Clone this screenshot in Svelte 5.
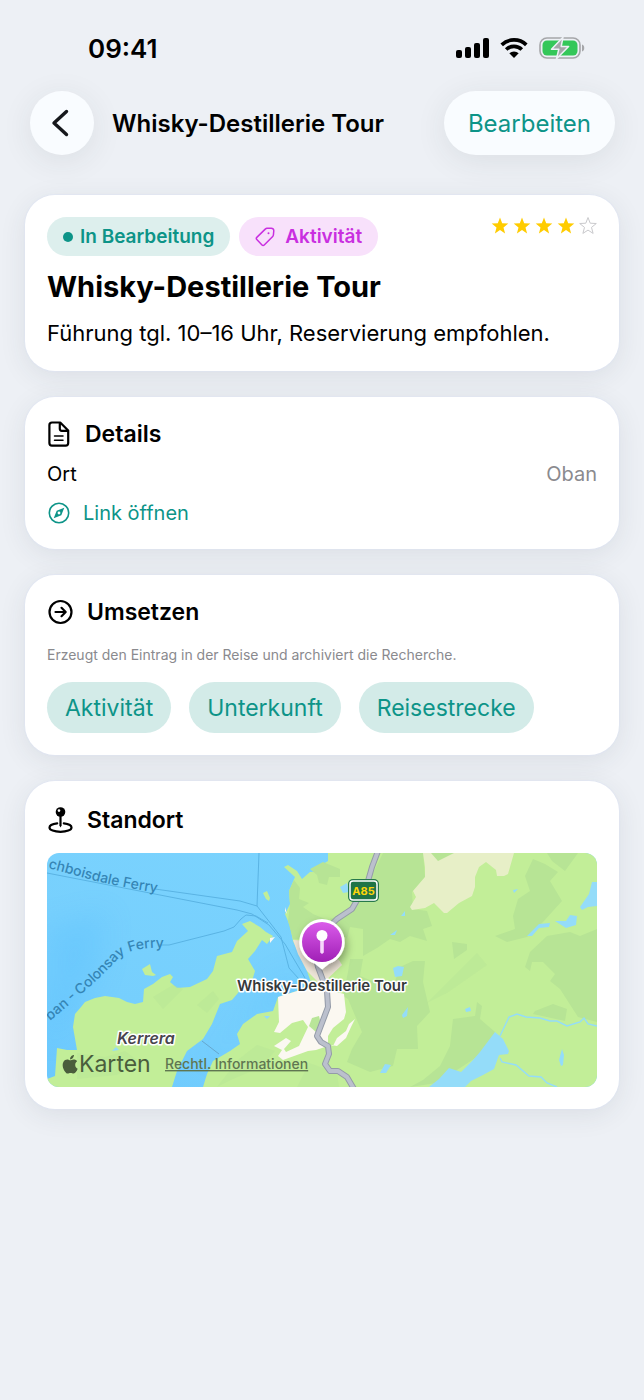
<script lang="ts">
	const title = 'Whisky-Destillerie Tour';
	const rating = 4;
	const targets = ['Aktivität', 'Unterkunft', 'Reisestrecke'];
	const starPath = 'M9 .5l2.200 5.700 6.100.3-4.800 3.900 1.600 6L9 13.100l-5.100 3.300 1.600-6L.7 6.500l6.100-.3z';
	const roadPath =
		'M331-2L325 14 321 28 305 56 290 66 274 82 268 100 271 114 280 138 281 154 270 183 274 189 281 193 282 201 278 211 283 218 291 218 300 224 307 236';
</script>

<div class="screen">
	<div class="status">
		<span class="time">09:41</span>
		<div class="indicators">
			<svg width="33" height="20" viewBox="0 0 33 20" aria-hidden="true">
				<rect x="0" y="12" width="6" height="8" rx="2" />
				<rect x="9" y="9" width="6" height="11" rx="2" />
				<rect x="18" y="5" width="6" height="15" rx="2" />
				<rect x="27" y="0" width="6" height="20" rx="2" />
			</svg>
			<svg width="28" height="20" viewBox="0 0 28 20" aria-hidden="true">
				<path d="M1.700 6.800a17.800 17.800 0 0 1 24.600 0M6.200 11.500a11.300 11.300 0 0 1 15.600 0" fill="none" stroke="#000" stroke-width="3.700" />
				<path d="M9.300 15.300a7 7 0 0 1 9.400 0L14 20z" />
			</svg>
			<svg width="46" height="22" viewBox="0 0 46 22" aria-hidden="true">
				<rect x="1" y="1" width="40" height="20" rx="7" fill="none" stroke="#a5a6a9" stroke-width="1.600" />
				<path d="M43 7.500c3 .8 3 6.200 0 7z" fill="#a5a6a9" />
				<rect x="3.500" y="3.500" width="35" height="15" rx="4.500" fill="#34c759" />
				<path d="M24 .2L12.500 12.300h7.300L17.500 21.800l12.100-12.300h-7.400z" fill="#a5a6a9" stroke="#edf0f5" stroke-width="1.500" stroke-linejoin="round" />
			</svg>
		</div>
	</div>

	<header>
		<button class="back" aria-label="Zurück">
			<svg width="18" height="28" viewBox="0 0 18 28" aria-hidden="true">
				<path d="M15.500 2.500L3 14l12.500 11.500" fill="none" stroke="#16181c" stroke-width="3.400" stroke-linecap="round" stroke-linejoin="round" />
			</svg>
		</button>
		<h1>{title}</h1>
		<button class="edit">Bearbeiten</button>
	</header>

	<main>
		<section class="card summary">
			<div class="top">
				<span class="chip status-chip"><i></i>In Bearbeitung</span>
				<span class="chip type-chip">
					<svg width="20" height="20" viewBox="0 0 20 20" fill="none" stroke="currentColor" stroke-width="1.500" stroke-linejoin="round" aria-hidden="true">
						<path d="M10.500 1.900L1.800 10.400a1.500 1.500 0 0 0 0 2.100l5.200 5.500a1.500 1.500 0 0 0 2.200 0L17.700 9.500q.6-.6.7-1.500l.4-4.200a2.500 2.500 0 0 0-2.700-2.600l-4.100.1q-.9.1-1.500.6z" />
						<circle cx="13.500" cy="6.300" r="1" fill="currentColor" stroke="none" />
					</svg>
					Aktivität
				</span>
				<div class="stars" role="img" aria-label="{rating} von 5">
					{#each [1, 2, 3, 4, 5] as n}
						<svg class:empty={n > rating} width="18" height="18" viewBox="0 0 18 18" aria-hidden="true"><path d={starPath} /></svg>
					{/each}
				</div>
			</div>
			<h2>{title}</h2>
			<p>Führung tgl. 10–16 Uhr, Reservierung empfohlen.</p>
		</section>

		<section class="card details">
			<h3>
				<svg width="24" height="28" viewBox="0 0 24 28" fill="none" stroke="#000" stroke-width="2.200" stroke-linecap="round" stroke-linejoin="round" aria-hidden="true">
					<path d="M5 2.500h8.200l8 8V23a2.600 2.600 0 0 1-2.600 2.600H5A2.600 2.600 0 0 1 2.400 23V5.100A2.600 2.600 0 0 1 5 2.500zM12.800 2.800v6a2 2 0 0 0 2 2h6" />
					<path d="M7.500 16h8.500M7.500 20.200h8.500" stroke-width="1.500" />
				</svg>
				Details
			</h3>
			<dl>
				<dt>Ort</dt>
				<dd>Oban</dd>
			</dl>
			<a class="link" href="#link">
				<svg width="24" height="24" viewBox="0 0 24 24" aria-hidden="true">
					<circle cx="12" cy="12" r="9.700" fill="none" stroke="currentColor" stroke-width="1.600" />
					<path d="M17.300 6.700l-3 7.600-7.600 3 3-7.600z" fill="currentColor" />
					<circle cx="12" cy="12" r="1.400" fill="#fff" />
				</svg>
				Link öffnen
			</a>
		</section>

		<section class="card convert">
			<h3>
				<svg width="26" height="26" viewBox="0 0 26 26" fill="none" stroke="#000" stroke-width="2.200" stroke-linecap="round" stroke-linejoin="round" aria-hidden="true">
					<circle cx="13.500" cy="13" r="11" />
					<path d="M8.500 13h10M14.500 8.800l4.200 4.200-4.200 4.200" />
				</svg>
				Umsetzen
			</h3>
			<p>Erzeugt den Eintrag in der Reise und archiviert die Recherche.</p>
			<div class="targets">
				{#each targets as target}
					<button>{target}</button>
				{/each}
			</div>
		</section>

		<section class="card place">
			<h3>
				<svg width="26" height="28" viewBox="0 0 26 28" aria-hidden="true">
					<path d="M10.200 17.300C5 17.900 2.500 19.500 2.500 21.400c0 2.600 4.800 4.400 11 4.400s11-1.800 11-4.400c0-1.900-2.500-3.500-7.700-4.100" fill="none" stroke="#000" stroke-width="2.200" stroke-linecap="round" />
					<path d="M12.400 9h2.200v10.500l-1.100 2-1.100-2z" />
					<circle cx="13.500" cy="6" r="4.800" />
					<circle cx="12" cy="4.600" r="1.300" fill="#fff" />
				</svg>
				Standort
			</h3>
			<svg class="map" viewBox="0 0 550 234">
				<defs>
					<linearGradient id="sea" x1="0" y1="1" x2="1" y2="0">
						<stop offset="0" stop-color="#6ac8fe" />
						<stop offset="0.250" stop-color="#76cffd" />
						<stop offset="1" stop-color="#7dd5fe" />
					</linearGradient>
					<linearGradient id="pin" x1="0" y1="0" x2="0" y2="1">
						<stop offset="0" stop-color="#da5bea" />
						<stop offset="1" stop-color="#a01fb6" />
					</linearGradient>
					<filter id="soft" x="-50%" y="-50%" width="200%" height="200%">
						<feGaussianBlur stdDeviation="14" />
					</filter>
					<filter id="drop" x="-50%" y="-50%" width="200%" height="200%">
						<feDropShadow dx="2" dy="4" stdDeviation="4" flood-opacity="0.350" />
					</filter>
					<path id="north-ferry" d="M1 15L34 24Q70 34 120 41" />
					<path id="south-ferry" d="M3 168C34 142 52 126 66 111C76 99 88 93 130 95" />
				</defs>

				<rect width="550" height="234" fill="url(#sea)" />
				<path d="M0 75L60 60 50 120 20 170 0 190zM160 205l45-50 30-30 18-8-6 30-50 25-40 40z" fill="#55bcff" opacity="0.300" filter="url(#soft)" />

				<!-- land -->
				<g fill="#c2ee98">
					<path d="M0 226L8 223 10 195 20 197 30 197 26 174 28 161 34 154 38 149 48 145 58 143 72 145 80 149 88 151 96 149 97 136 106 131 115 124 123 121 126 124 123 129 130 135 143 134 160 126 166 118 170 103 185 99 190 88 201 78 195 71 203 68 213 74 219 79 226 83 220 91 215 87 208 98 201 106 208 118 205 128 196 134 185 147 173 151 165 171 156 186 140 198 130 218 125 234H0z" />
					<path d="M156 234L160 221 166 208 183 198 193 191 190 181 196 171 210 161 226 158 231 144 250 138 267 138 260 118 252 101 246 88 243 73 238 61 243 51 242 38 248 24 237 14 241 12 250 18 255 26 263 19 273 18 276 11 281 8V0H550V234z" />
					<path d="M95 116l8-5 2 8 4 3-3 1-8-1zM216 40l4-2 3 7-1 3-3-2z" />
				</g>

				<!-- forest -->
				<g fill="#b7e495">
					<path d="M336 0L376 0 378 24 365 39 366 56 380 58 385 73 376 76 380 88 363 83 353 89 343 86 330 95 316 103 316 76 303 74 300 86 283 66 301 58 312 44 323 26z" />
					<path d="M243 51L242 38 247 27 253 35 252 46 262 50 256 54 266 61 283 68 272 88 253 86 246 86 241 68zM263 16L276 9 293 16 293 24 282 24 280 32 272 30 270 22z" />
					<path d="M303 106L316 106 313 123 330 130 348 128 353 114 366 108 378 108 376 129 383 159 370 173 371 196 350 196 346 213 323 219 300 209 305 196 315 179 301 146 296 143 301 119z" />
					<path d="M478 23L486 6 498 11 511 19 503 28 515 48 496 69 480 84 460 89 448 83 468 76 466 63 471 46 483 38z" />
					<path d="M478 114L483 99 500 83 523 79 533 83 550 76 550 169 531 164 513 136 503 128 508 121 496 109 485 109 483 118z" />
					<path d="M500 0L531 0 518 18 505 8zM488 158L506 151 520 156 518 168 486 161zM405 89L420 91 420 97 407 106z" />
					<path d="M363 234L376 227 393 213 403 193 406 166 428 163 430 149 435 153 433 166 448 179 436 200 390 230z" />
				</g>
				<g fill="#b7e495" opacity="0.400">
					<path d="M170 234L192 206 210 192 228 198 214 214 186 226zM30 200L58 204 78 198 94 210 70 222 30 226zM106 144L126 132 136 136 116 156zM150 152L166 138 172 146 160 160zM380 150L410 120 430 100 440 112 400 140zM262 210L290 220 292 234 250 234z" />
				</g>

				<!-- moor and town -->
				<path d="M376 0H467L461 21 457 23 450 23 449 17 439 9 432 14 428 24 428 34 425 43 412 50 400 60 397 60 387 50 378 55 365 57 363 54 369 44 366 38 378 24 378 14z" fill="#e7efc7" />
				<path d="M384 0h23l-8 4-8 4z" fill="#b7e495" />
				<path d="M246 87l20 1 26 19 3 5-21 20-14-14-9-17z" fill="#eee5d8" />
				<path d="M231 144l35-11 31 8 2 18-2 7-11 9-5 8 0 10-12 4-8 1-25 9-5-4 4-6-8-4 12-8 5 3-7 8 2 3 13-6 9-19-5-7-11 3-12 10-6-1 5-10zM286 193l4-8 9-7 3-7 6-5-4 8-5 11-9 8-6-1zM223 85l5-1-5 6zM238 54l2 7-2-3z" fill="#fbf8f1" />
				<path d="M265 165l7-2 2 8-5 8-7-6z" fill="#b9e699" />

				<!-- lakes and streams -->
				<g fill="#94dcf9">
					<path d="M382 234L392 226 402 215 414 219 426 207 433 199 448 179 456 186 462 198 461 201 452 202 447 216 436 222 424 228 418 234zM480 83l12-12 11-1-1 4-10 1-7 8zM508 68l11 0 4-6 7 1-1 9-10 3zM533 54l9-13 3-12h5v24l-9 1-6 3zM512 207l3-11 2 6-1 10-2 1zM346 115l5-2 6 1-2 9-7 1zM355 162l6-8-1 9-4 2zM333 220l5-9 6 1-5 8zM293 34l7-4 2 9-6 1zM354 63l4-5v5zM343 82l7-5-2 5zM65 198l4-4 3 3zM217 163l6 0-3 3zM418 156l5-2 1 4-5 1zM466 37l5-1-4 4z" />
				</g>
				<g fill="none" stroke="#94dcf9" stroke-width="1.400">
					<path d="M453 183l9-19 8-3 9 3 14 1 10 3 7 0 10 5 13-4 4-4 4 6 9 2M453 205l2 4 14 3 13 11 12 1 6 6 10 4" />
				</g>
				<path d="M155 188l17 13" stroke="#65a7ce" fill="none" />

				<!-- ferry routes -->
				<g fill="none" stroke="#5ab3e3" stroke-width="1">
					<path d="M0 20L190 57 205 61 222 72 238 91 258 125" />
					<path d="M108 36L193 48 210 53 224 71 234 84 242 115 252 126M212 0L210 53" />
					<path d="M112 92h10l55-14 10-4 7-8 5-4 10 1 12 7" />
				</g>

				<!-- main road -->
				<g fill="none" stroke-linejoin="round" stroke-linecap="round">
					<path d={roadPath} stroke="#949ba8" stroke-width="6" />
					<path d={roadPath} stroke="#bbc0cd" stroke-width="4" />
				</g>

				<rect x="301" y="26" width="31" height="23" rx="5" fill="#27784b" />
				<rect x="303" y="28" width="27" height="19" rx="3" fill="#207447" stroke="#fff" stroke-width="1.500" />
				<text class="road-label" x="316.500" y="42" text-anchor="middle">A85</text>

				<g class="sea-label">
					<text><textPath href="#north-ferry">chboisdale Ferry</textPath></text>
					<text><textPath href="#south-ferry">ban - Colonsay Ferry</textPath></text>
				</g>
				<text class="island" x="70" y="191">Kerrera</text>

				<g filter="url(#drop)">
					<path d="M275 66a23 23 0 0 1 7 44.800l-7 5.700-7-5.700A23 23 0 0 1 275 66z" fill="#fff" />
				</g>
				<circle cx="275" cy="89" r="20" fill="url(#pin)" />
				<path d="M273.200 84h3.600v15.500l-1.800 1.500-1.800-1.500z" fill="#f6d6fa" />
				<circle cx="275" cy="82.500" r="5.500" fill="#fff" />
				<text class="place-label" x="275" y="138" text-anchor="middle">{title}</text>

				<g fill="#4a5d3c">
					<path d="M28.200 211.800c-.1-2.300 1.900-3.400 2-3.500-1.100-1.600-2.800-1.800-3.400-1.800-1.400-.2-2.800.8-3.500.8s-1.900-.8-3-.8c-1.600 0-3 .9-3.800 2.300-1.700 2.900-.4 7.100 1.200 9.400.8 1.100 1.700 2.400 2.900 2.400s1.600-.7 3-.7 1.800.7 3 .7 2-1.100 2.800-2.300c.9-1.300 1.200-2.500 1.200-2.600 0 0-2.400-.9-2.400-3.900zM25.900 205.100c.6-.8 1.100-1.900 1-3-1 0-2.100.6-2.800 1.400-.6.7-1.200 1.900-1 3 1.100 0 2.100-.6 2.800-1.400z" />
					<text class="brand" x="32" y="219">Karten</text>
				</g>
				<a href="#legal"><text class="legal" x="118" y="216">Rechtl. Informationen</text></a>
			</svg>
		</section>
	</main>
</div>

<style>
	:global(body) {
		margin: 0;
		background: #edf0f5;
	}

	.screen {
		font-family: Inter, 'Liberation Sans', sans-serif;
		color: #000;
	}

	h1,
	h2,
	h3,
	p,
	dl,
	dd {
		margin: 0;
	}

	button {
		border: 0;
		padding: 0;
		font: inherit;
		cursor: pointer;
	}

	svg {
		display: block;
		flex: none;
	}

	.status {
		display: flex;
		align-items: center;
		justify-content: space-between;
		height: 32px;
		padding: 32px 59px 27px 88px;
	}

	.time {
		font-size: 26px;
		font-weight: 600;
	}

	.indicators {
		display: flex;
		align-items: center;
		gap: 11px;
	}

	header {
		display: flex;
		align-items: center;
		gap: 18px;
		padding: 0 29px 40px 30px;
	}

	.back,
	.edit {
		display: flex;
		align-items: center;
		justify-content: center;
		height: 64px;
		border-radius: 32px;
		background: #f9fcff;
		box-shadow: 0 6px 32px rgba(40, 50, 60, 0.09);
	}

	.back {
		width: 64px;
	}

	.back svg {
		margin-right: 4px;
	}

	.edit {
		margin-left: auto;
		padding: 0 24px;
		color: #0d9488;
		font-size: 24px;
	}

	h1 {
		font-size: 24px;
		font-weight: 600;
	}

	main {
		display: flex;
		flex-direction: column;
		gap: 26px;
		padding: 0 25px 40px;
	}

	.card {
		display: flex;
		flex-direction: column;
		padding: 22px;
		border-radius: 30px;
		background: #fff;
		box-shadow: 0 0 1px 1px rgba(222, 229, 243, 0.6), 0 6px 28px rgba(40, 50, 70, 0.09);
	}

	.summary {
		gap: 13px;
	}

	.top {
		display: flex;
		align-items: flex-start;
		gap: 9px;
	}

	.chip {
		display: flex;
		align-items: center;
		height: 39px;
		padding: 0 16px;
		border-radius: 20px;
		font-size: 19px;
		font-weight: 600;
	}

	.status-chip {
		gap: 7px;
		background: #ddefed;
		color: #0d9488;
	}

	.status-chip i {
		width: 10px;
		height: 10px;
		border-radius: 50%;
		background: currentColor;
	}

	.type-chip {
		gap: 10px;
		background: #f8e1fb;
		color: #c92fe0;
	}

	.stars {
		display: flex;
		gap: 4px;
		margin-left: auto;
		fill: #ffcc00;
	}

	.stars .empty {
		fill: none;
		stroke: #c9c9cc;
	}

	h2 {
		font-size: 29px;
		font-weight: 700;
		line-height: 36px;
	}

	.summary p {
		font-size: 22px;
		line-height: 31px;
	}

	h3 {
		display: flex;
		align-items: center;
		gap: 14px;
		font-size: 23px;
		font-weight: 600;
		line-height: 30px;
	}

	.details {
		gap: 11px;
		font-size: 20px;
		line-height: 28px;
	}

	dl {
		display: flex;
		justify-content: space-between;
	}

	dd {
		color: #8a8a8e;
	}

	.link {
		display: flex;
		align-items: center;
		gap: 12px;
		color: #0d9488;
		text-decoration: none;
	}

	.convert {
		gap: 18px;
	}

	.convert p {
		color: #8a8a8e;
		font-size: 14px;
		line-height: 19px;
	}

	.targets {
		display: flex;
		flex-wrap: wrap;
		gap: 18px;
	}

	.targets button {
		height: 51px;
		padding: 0 18px;
		border-radius: 26px;
		background: #d3ebe8;
		color: #0d9488;
		font-size: 23px;
	}

	.place {
		gap: 18px;
		padding-top: 24px;
	}

	.map {
		width: 100%;
		height: auto;
		border-radius: 12px;
	}

	.road-label {
		fill: #ffd60a;
		font-size: 11px;
		font-weight: 700;
	}

	.sea-label {
		fill: #3585b5;
		font-size: 14px;
		font-weight: 500;
	}

	.island,
	.place-label {
		fill: #48454d;
		stroke: #fff;
		stroke-width: 3px;
		stroke-linejoin: round;
		paint-order: stroke;
		font-size: 15px;
		font-weight: 600;
	}

	.island {
		font-size: 16px;
		font-style: italic;
	}

	.place-label {
		fill: #35393b;
	}

	.brand {
		font-size: 23px;
	}

	.legal {
		fill: #5f7651;
		font-size: 14px;
		font-weight: 500;
		text-decoration: underline;
	}
</style>
